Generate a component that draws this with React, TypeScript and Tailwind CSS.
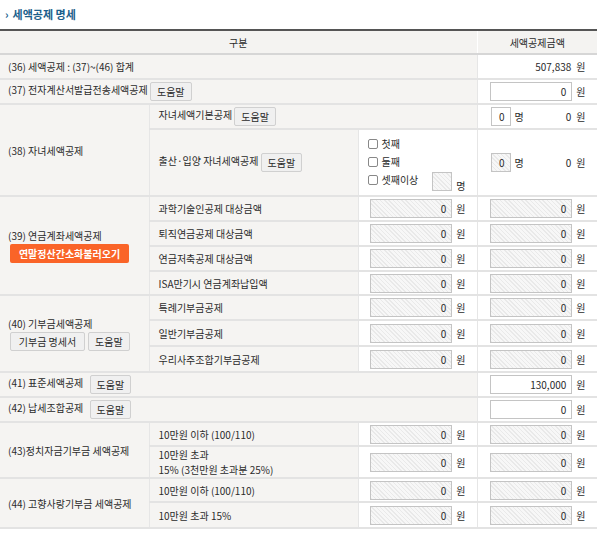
import type { ReactNode } from 'react';

const hatch =
  'bg-[repeating-linear-gradient(45deg,#e9e9e9_0px,#e9e9e9_1px,#f7f7f7_1px,#f7f7f7_3px)]';

function HelpButton({ children = '도움말' }: { children?: ReactNode }) {
  return (
    <span className="inline-flex h-[19px] items-center rounded-[2px] border border-[#d0d0d0] bg-[#f0f0f0] px-[6px] align-middle text-[10px] text-[#2b2b2b]">
      {children}
    </span>
  );
}

function Amount({ value = '0', disabled = false, wide = true }: { value?: string; disabled?: boolean; wide?: boolean }) {
  return (
    <span
      className={`inline-flex h-[19px] items-center justify-end border border-[#c4c4c4] pr-[5px] align-middle text-[10px] text-[#2b2b2b] ${
        wide ? 'w-[82px]' : 'w-[20px]'
      } ${disabled ? hatch : 'bg-white'}`}
    >
      {value}
    </span>
  );
}

function Won({ value = '0', disabled = true }: { value?: string; disabled?: boolean }) {
  return (
    <div className="flex items-center justify-end gap-[4px] pr-[11px]">
      <Amount value={value} disabled={disabled} />
      <span>원</span>
    </div>
  );
}

function Check({ label }: { label: string }) {
  return (
    <span className="flex h-[13px] items-center gap-[4px]">
      <span className="h-[10px] w-[10px] rounded-[2px] border border-[#888] bg-white" />
      {label}
    </span>
  );
}

const lab = 'bg-[#f5f4f2] border-b-2 border-r border-b-[#e3e3e3] border-r-[#e6e6e6] align-middle';
const val = 'bg-white border-b-2 border-r border-b-[#e3e3e3] border-r-[#e6e6e6] align-middle';

export default function App() {
  return (
    <div className="h-[534px] w-[597px] bg-white font-['Noto_Sans_CJK_KR','Noto_Sans',sans-serif] text-[10px] leading-[13px] text-[#2b2b2b]">
      <div className="flex h-[29px] items-center pl-[5px] pb-[1px] text-[11px] font-bold text-[#1b5f8c]">
        <span className="mr-[4px] text-[11px]">›</span>세액공제 명세
      </div>
      <table className="w-[597px] table-fixed border-collapse border-t-2 border-t-[#555]">
        <colgroup>
          <col className="w-[149px]" />
          <col className="w-[209px]" />
          <col className="w-[119px]" />
          <col className="w-[120px]" />
        </colgroup>
        <tbody>
          <tr className="h-[24px]">
            <th colSpan={3} className="border-b-2 border-r border-b-[#d6d6d6] border-r-white bg-[#f4f3f1] font-normal">
              구분
            </th>
            <th className="border-b-2 border-b-[#d6d6d6] bg-[#f4f3f1] font-normal">세액공제금액</th>
          </tr>
          <tr className="h-[25px]">
            <td colSpan={3} className={`${lab} pl-[8px]`}>
              (36) 세액공제 : (37)~(46) 합계
            </td>
            <td className={`${val} pr-[11px] text-right`}>
              507,838<span className="ml-[5px]">원</span>
            </td>
          </tr>
          <tr className="h-[25px]">
            <td colSpan={3} className={`${lab} pl-[8px]`}>
              (37) 전자계산서발급전송세액공제 <HelpButton />
            </td>
            <td className={val}>
              <Won disabled={false} />
            </td>
          </tr>
          <tr className="h-[25px]">
            <td rowSpan={2} className={`${lab} pl-[8px]`}>
              (38) 자녀세액공제
            </td>
            <td colSpan={2} className={`${lab} pl-[9px]`}>
              자녀세액기본공제 <HelpButton />
            </td>
            <td className={val}>
              <div className="flex items-center pl-[13px] pr-[11px]">
                <Amount wide={false} />
                <span className="ml-[4px]">명</span>
                <span className="ml-auto">0</span>
                <span className="ml-[5px]">원</span>
              </div>
            </td>
          </tr>
          <tr className="h-[67px]">
            <td className={`${lab} pl-[9px]`}>
              출산·입양 자녀세액공제 <HelpButton />
            </td>
            <td className={val}>
              <div className="flex flex-col gap-[5px] pl-[9px] pb-[2px]">
                <Check label="첫째" />
                <Check label="둘째" />
                <div className="flex h-[13px] items-start">
                  <Check label="셋째이상" />
                  <span className="ml-[14px] -mt-[1px]">
                    <Amount wide={false} disabled value="" />
                  </span>
                  <span className="ml-[4px] mt-[6px]">명</span>
                </div>
              </div>
            </td>
            <td className={val}>
              <div className="flex items-center pl-[13px] pr-[11px]">
                <Amount wide={false} disabled />
                <span className="ml-[4px]">명</span>
                <span className="ml-auto">0</span>
                <span className="ml-[5px]">원</span>
              </div>
            </td>
          </tr>
          {['과학기술인공제 대상금액', '퇴직연금공제 대상금액', '연금저축공제 대상금액', 'ISA만기시 연금계좌납입액'].map((t, i) => (
            <tr key={t} className={i === 3 ? 'h-[24px]' : 'h-[25px]'}>
              {i === 0 && (
                <td rowSpan={4} className={`${lab} pl-[8px]`}>
                  <div>(39) 연금계좌세액공제</div>
                  <div className="ml-[2px] mt-[2px] inline-flex h-[19px] w-[119px] items-center justify-center rounded-[2px] bg-[#fa6428] font-bold text-white">
                    연말정산간소화불러오기
                  </div>
                </td>
              )}
              <td className={`${lab} pl-[9px]`}>{t}</td>
              <td className={val}>
                <Won />
              </td>
              <td className={val}>
                <Won />
              </td>
            </tr>
          ))}
          {['특례기부금공제', '일반기부금공제', '우리사주조합기부금공제'].map((t, i) => (
            <tr key={t} className={i === 0 ? 'h-[25px]' : 'h-[26px]'}>
              {i === 0 && (
                <td rowSpan={3} className={`${lab} pl-[8px]`}>
                  <div>(40) 기부금세액공제</div>
                  <div className="ml-[2px] mt-[2px] flex gap-[3px]">
                    <span className="inline-flex h-[19px] w-[75px] items-center justify-center rounded-[2px] border border-[#d0d0d0] bg-[#f0f0f0]">
                      기부금 명세서
                    </span>
                    <HelpButton />
                  </div>
                </td>
              )}
              <td className={`${lab} pl-[9px]`}>{t}</td>
              <td className={val}>
                <Won />
              </td>
              <td className={val}>
                <Won />
              </td>
            </tr>
          ))}
          <tr className="h-[25px]">
            <td colSpan={3} className={`${lab} pl-[8px]`}>
              (41) 표준세액공제 <span className="ml-[4px]"><HelpButton /></span>
            </td>
            <td className={val}>
              <Won value="130,000" disabled={false} />
            </td>
          </tr>
          <tr className="h-[25px]">
            <td colSpan={3} className={`${lab} pl-[8px]`}>
              (42) 납세조합공제 <span className="ml-[4px]"><HelpButton /></span>
            </td>
            <td className={val}>
              <Won disabled={false} />
            </td>
          </tr>
          <tr className="h-[24px]">
            <td rowSpan={2} className={`${lab} pl-[8px]`}>
              (43)정치자금기부금 세액공제
            </td>
            <td className={`${lab} pl-[9px]`}>10만원 이하 (100/110)</td>
            <td className={val}>
              <Won />
            </td>
            <td className={val}>
              <Won />
            </td>
          </tr>
          <tr className="h-[31px]">
            <td className={`${lab} pl-[9px] leading-[15px]`}>
              10만원 초과
              <br />
              15% (3천만원 초과분 25%)
            </td>
            <td className={val}>
              <Won />
            </td>
            <td className={val}>
              <Won />
            </td>
          </tr>
          <tr className="h-[24px]">
            <td rowSpan={2} className={`${lab} pl-[8px]`}>
              (44) 고향사랑기부금 세액공제
            </td>
            <td className={`${lab} pl-[9px]`}>10만원 이하 (100/110)</td>
            <td className={val}>
              <Won />
            </td>
            <td className={val}>
              <Won />
            </td>
          </tr>
          <tr className="h-[26px]">
            <td className={`${lab} pl-[9px]`}>10만원 초과 15%</td>
            <td className={val}>
              <Won />
            </td>
            <td className={val}>
              <Won />
            </td>
          </tr>
        </tbody>
      </table>
    </div>
  );
}
